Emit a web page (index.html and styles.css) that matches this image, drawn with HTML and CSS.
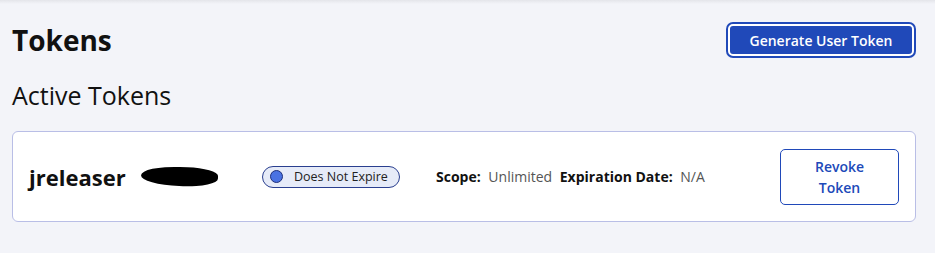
FILE: index.html
```html
<!DOCTYPE html>
<html lang="en">
  <head>
    <meta charset="UTF-8">
    <meta name="viewport" content="width=device-width, initial-scale=1.0">
    <title>Tokens</title>
    <link rel="stylesheet" href="styles.css">
  </head>
  <body>
    <div class="topbar"></div>
    <main>
      <div class="page-head">
        <h1>Tokens</h1>
        <button class="btn-primary">Generate User Token</button>
      </div>
      <h2>Active Tokens</h2>
      <div class="token-card">
        <div class="token-name">
          <span>jreleaser</span>
          <span class="redacted"></span>
        </div>
        <span class="pill"><span class="dot"></span>Does Not Expire</span>
        <div class="token-meta">
          <b>Scope:</b> <span class="val">Unlimited</span>
          <b>Expiration Date:</b> <span class="val">N/A</span>
        </div>
        <button class="btn-outline">Revoke<br>Token</button>
      </div>
    </main>
  </body>
</html>
```

FILE: styles.css
```css
body {
    margin: 0;
    background-color: #f3f4f9;
    font-family: "Open Sans", "Noto Sans", sans-serif;
    color: #111;
}
.topbar {
    height: 4px;
    background: linear-gradient(#e4e5ea, #f3f4f9);
}
main {
    padding: 0 19px 0 12px;
}
.page-head {
    display: flex;
    justify-content: space-between;
    align-items: center;
    padding-top: 18px;
}
h1 {
    margin: 0;
    font-size: 28px;
    font-weight: 700;
    line-height: 36px;
}
.btn-primary {
    width: 186px;
    height: 32px;
    font-family: inherit;
    font-size: 14px;
    font-weight: 600;
    color: #fff;
    background-color: #2049b9;
    border: 2px solid #fff;
    border-radius: 5px;
    box-shadow: 0 0 0 2px #2049b9;
    margin-right: 2px;
}
h2 {
    margin: 21px 0 0 0;
    font-size: 25px;
    font-weight: 400;
    line-height: 32px;
}
.token-card {
    margin-top: 20px;
    height: 89px;
    display: flex;
    align-items: center;
    background-color: #fff;
    border: 1px solid #b9bee6;
    border-radius: 6px;
    padding: 0 16px 0 16px;
}
.token-name {
    display: flex;
    align-items: center;
    font-size: 22px;
    font-weight: 700;
    width: 233px;
}
.redacted {
    display: inline-block;
    width: 77px;
    height: 19px;
    margin-left: 15px;
    background-color: #000;
    border-radius: 50% 40% 45% 50%;
    transform: rotate(2deg);
}
.pill {
    display: inline-flex;
    align-items: center;
    width: 138px;
    height: 22px;
    box-sizing: border-box;
    border: 1px solid #2a3f8f;
    border-radius: 11px;
    background-color: #e6ebf8;
    font-size: 12.5px;
    color: #222;
    padding-left: 7px;
}
.dot {
    width: 11px;
    height: 11px;
    border-radius: 50%;
    background-color: #4a72e2;
    border: 1px solid #1f2f7a;
    margin-right: 11px;
}
.token-meta {
    margin-left: 36px;
    font-size: 14px;
    flex: 1;
}
.token-meta b {
    font-weight: 700;
}
.token-meta .val {
    color: #555;
    margin-left: 4px;
    margin-right: 4px;
}
.btn-outline {
    width: 119px;
    height: 56px;
    font-family: inherit;
    font-size: 14px;
    font-weight: 600;
    line-height: 21px;
    color: #2049b9;
    background-color: #fff;
    border: 1px solid #2049b9;
    border-radius: 5px;
}
```
